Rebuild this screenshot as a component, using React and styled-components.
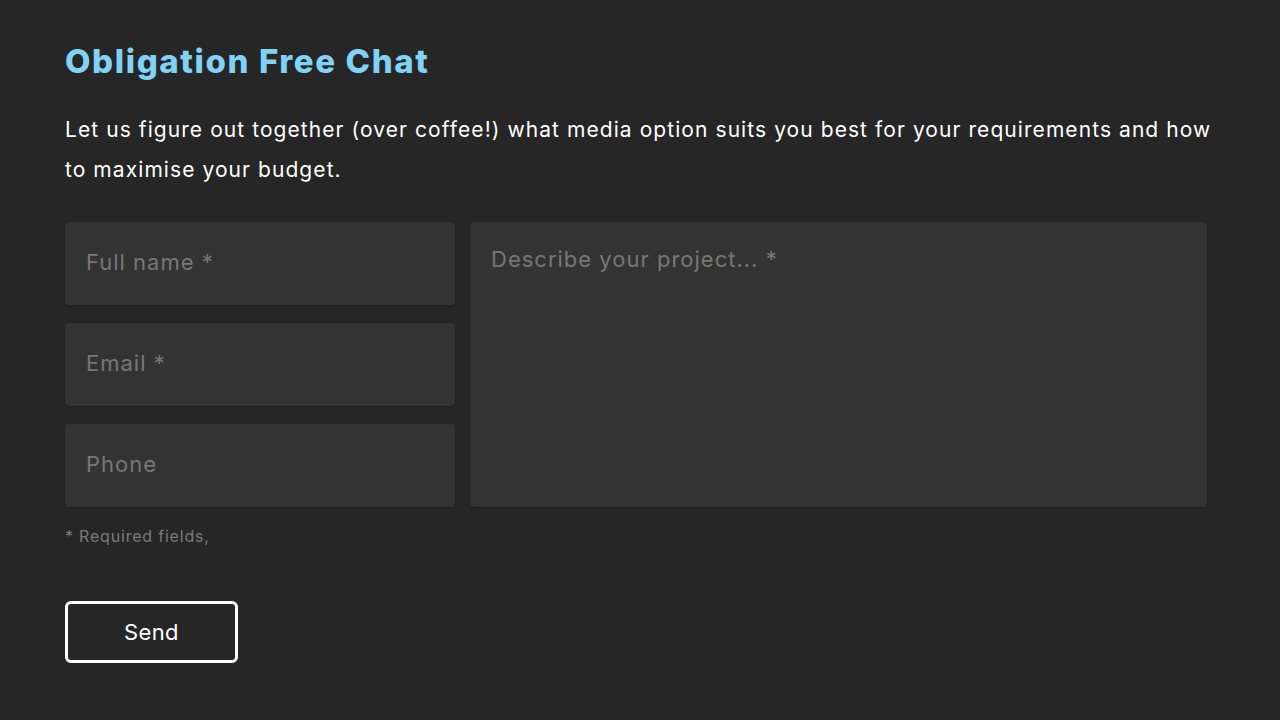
import React from "react"
import styled, { createGlobalStyle } from "styled-components"

const GlobalStyle = createGlobalStyle`
  html, body {
    margin: 0;
    background: #262626;
  }
  body {
    font-family: Inter, "Noto Sans", sans-serif;
  }
`

const App = () => {
  return (
    <>
      <GlobalStyle />
      <ContactSection>
        <Heading>Obligation Free Chat</Heading>
        <Intro>
          Let us figure out together (over coffee!) what media option suits you
          best for your requirements and how to maximise your budget.
        </Intro>
        <Form onSubmit={e => e.preventDefault()}>
          <FieldGrid>
            <FieldColumn>
              <Input placeholder="Full name *" />
              <Input placeholder="Email *" />
              <Input placeholder="Phone" />
            </FieldColumn>
            <Message placeholder="Describe your project... *" />
          </FieldGrid>
          <Note>* Required fields,</Note>
          <SendButton type="submit">Send</SendButton>
        </Form>
      </ContactSection>
    </>
  )
}

export default App

const ContactSection = styled.section`
  box-sizing: border-box;
  width: 1225px;
  min-height: 720px;
  padding: 41px 0 56px 65px;
`

const Heading = styled.h2`
  margin: 0;
  color: #80d3f7;
  font-family: Inter, "Noto Sans", sans-serif;
  font-size: 33px;
  font-weight: 800;
  line-height: 40px;
  letter-spacing: 1.6px;
`

const Intro = styled.p`
  margin: 29px 0 0;
  color: #fff;
  font-size: 21px;
  line-height: 40px;
  letter-spacing: 1.07px;
`

const Form = styled.form`
  margin-top: 32px;
  display: flex;
  flex-direction: column;
  align-items: flex-start;
`

const FieldGrid = styled.div`
  display: grid;
  grid-template-columns: 390px 737px;
  gap: 15px;
`

const FieldColumn = styled.div`
  display: flex;
  flex-direction: column;
  gap: 18px;
`

const fieldStyles = `
  box-sizing: border-box;
  border: none;
  border-radius: 4px;
  background: #333;
  color: #ddd;
  font-family: Inter, "Noto Sans", sans-serif;
  font-size: 22px;
  letter-spacing: 1px;
  outline: none;
  box-shadow: 0 1px 2px rgba(0, 0, 0, 0.25);

  &::placeholder {
    color: #777;
  }
`

const Input = styled.input`
  ${fieldStyles}
  height: 83px;
  padding: 0 21px 4px;
`

const Message = styled.textarea`
  ${fieldStyles}
  height: 285px;
  padding: 24px 21px;
  resize: none;
`

const Note = styled.p`
  margin: 18px 0 0;
  color: #7a7a7a;
  font-size: 16px;
  line-height: 22px;
  letter-spacing: 0.8px;
`

const SendButton = styled.button`
  margin-top: 54px;
  box-sizing: border-box;
  width: 173px;
  height: 62px;
  padding-bottom: 2px;
  border: 3px solid #fff;
  border-radius: 6px;
  background: #262626;
  color: #fff;
  font-family: Inter, "Noto Sans", sans-serif;
  font-size: 22px;
  letter-spacing: 0.4px;
  cursor: pointer;
`
